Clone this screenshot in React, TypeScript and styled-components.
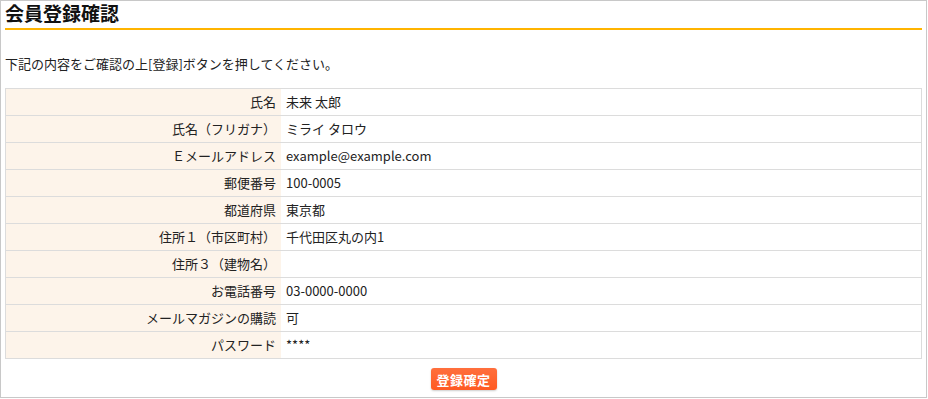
import React from "react";
import styled, { createGlobalStyle } from "styled-components";

const Global = createGlobalStyle`
  html, body { margin: 0; padding: 0; background: #fff; }
  body { font-family: "Noto Sans CJK JP", "Noto Sans", sans-serif; color: #222; }
`;

const Frame = styled.div`
  box-sizing: border-box;
  width: 927px;
  height: 398px;
  border: 1px solid #c8c8c8;
  padding: 0 4px;
`;

const Heading = styled.h1`
  margin: 0;
  padding: 0 0 3px;
  font-size: 19px;
  line-height: 24px;
  font-weight: 700;
  color: #111;
  border-bottom: 2px solid #ffb400;
`;

const Intro = styled.p`
  margin: 26px 0 16px;
  font-size: 13px;
  line-height: 16px;
`;

const Table = styled.table`
  width: 100%;
  border-collapse: collapse;
  font-size: 13px;
`;

const Label = styled.th`
  width: 270px;
  text-align: right;
  font-weight: 400;
  background: #fdf4ea;
  border: 1px solid #dcdcdc;
  border-right: none;
  padding: 5px 5px 5px 0;
  line-height: 16px;
  white-space: nowrap;
`;

const Value = styled.td`
  text-align: left;
  border: 1px solid #dcdcdc;
  border-left: none;
  padding: 5px 5px;
  line-height: 16px;
`;

const Actions = styled.div`
  display: flex;
  justify-content: center;
  margin-top: 9px;
`;

const Submit = styled.button`
  width: 66px;
  height: 22px;
  padding: 0;
  border: none;
  border-radius: 3px;
  background: linear-gradient(#ff6f3d, #ff5a22);
  box-shadow: 0 1px 2px rgba(0, 0, 0, 0.2);
  color: #fff;
  font-family: "Noto Sans CJK JP", sans-serif;
  font-size: 13px;
  font-weight: 700;
  letter-spacing: 0.5px;
  cursor: pointer;
`;

const rows: [string, string][] = [
  ["氏名", "未来 太郎"],
  ["氏名（フリガナ）", "ミライ タロウ"],
  ["Ｅメールアドレス", "example@example.com"],
  ["郵便番号", "100-0005"],
  ["都道府県", "東京都"],
  ["住所１（市区町村）", "千代田区丸の内1"],
  ["住所３（建物名）", ""],
  ["お電話番号", "03-0000-0000"],
  ["メールマガジンの購読", "可"],
  ["パスワード", "****"],
];

export default function App() {
  return (
    <>
      <Global />
      <Frame>
        <Heading>会員登録確認</Heading>
        <Intro>下記の内容をご確認の上[登録]ボタンを押してください。</Intro>
        <Table>
          <tbody>
            {rows.map(([k, v]) => (
              <tr key={k}>
                <Label>{k}</Label>
                <Value>{v}</Value>
              </tr>
            ))}
          </tbody>
        </Table>
        <Actions>
          <Submit type="button">登録確定</Submit>
        </Actions>
      </Frame>
    </>
  );
}
